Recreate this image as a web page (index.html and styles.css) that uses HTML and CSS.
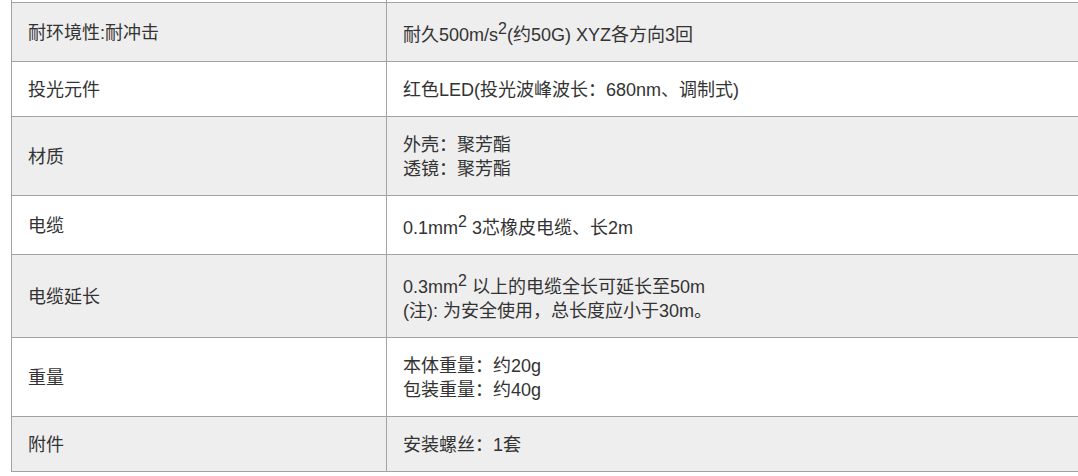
FILE: index.html
```html
<!DOCTYPE html>
<html lang="zh-CN">
<head>
<meta charset="utf-8">
<title>规格</title>
<link rel="stylesheet" href="styles.css">
</head>
<body>
<table class="spec">
  <tr class="cut"><td class="label"></td><td class="value"></td></tr>
  <tr class="alt"><td class="label">耐环境性:耐冲击</td><td class="value has-sup">耐久500m/s<sup>2</sup>(约50G) XYZ各方向3回</td></tr>
  <tr><td class="label">投光元件</td><td class="value">红色LED(投光波峰波长：680nm、调制式)</td></tr>
  <tr class="alt"><td class="label">材质</td><td class="value">外壳：聚芳酯<br>透镜：聚芳酯</td></tr>
  <tr><td class="label">电缆</td><td class="value has-sup">0.1mm<sup>2</sup> 3芯橡皮电缆、长2m</td></tr>
  <tr class="alt"><td class="label">电缆延长</td><td class="value has-sup">0.3mm<sup>2</sup> 以上的电缆全长可延长至50m<br>(注): 为安全使用，总长度应小于30m。</td></tr>
  <tr><td class="label">重量</td><td class="value">本体重量：约20g<br>包装重量：约40g</td></tr>
  <tr class="alt"><td class="label">附件</td><td class="value">安装螺丝：1套</td></tr>
</table>
</body>
</html>
```
FILE: styles.css
```css
html, body {
  margin: 0;
  padding: 0;
  overflow: hidden;
  background: #ffffff;
}
.spec {
  margin-left: 11px;
  width: 1100px;
  border-collapse: collapse;
  font-family: "Liberation Sans", Arial, "Noto Sans CJK SC", sans-serif;
  font-size: 18px;
  line-height: 24px;
  color: #333333;
}
.spec td {
  border: 1px solid #a3a3a3;
  padding: 16px 16px 14px 16px;
  vertical-align: middle;
  text-align: left;
}
.spec td.has-sup {
  padding-top: 20px;
}
.spec .label {
  width: 342px;
}
.spec .alt td {
  background: #eeeeee;
}
.spec .cut td {
  height: 2px;
  padding: 0;
  border-top: none;
}
.spec sup {
  font-size: 16px;
  line-height: 0;
  vertical-align: 7px;
}
```
